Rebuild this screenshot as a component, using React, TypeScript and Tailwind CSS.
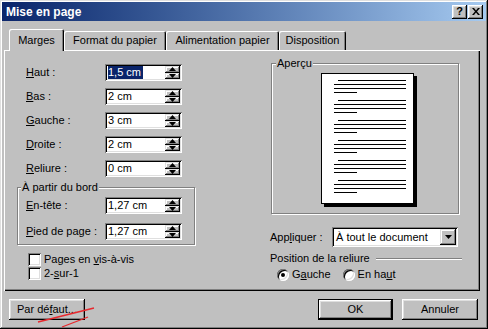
import React from 'react';

const raised = 'shadow-[inset_-1px_-1px_#000,inset_1px_1px_#fff,inset_-2px_-2px_#808080,inset_2px_2px_#dfdfdf]';
const sunken = 'shadow-[inset_1px_1px_#808080,inset_-1px_-1px_#fff,inset_2px_2px_#000,inset_-2px_-2px_#dfdfdf]';
const soft = 'shadow-[inset_-1px_-1px_#000,inset_1px_1px_#dfdfdf,inset_-2px_-2px_#808080,inset_2px_2px_#fff]';
const etched = 'border border-[#808080] shadow-[inset_1px_1px_#fff,1px_1px_#fff]';

const Acc = ({ children }: { children: React.ReactNode }) => <span className="underline underline-offset-[1px]">{children}</span>;

const Arrow = ({ down }: { down?: boolean }) => (
  <svg width="7" height="4" viewBox="0 0 7 4">
    <path d={down ? 'M0 0h7L3.5 4z' : 'M3.5 0L7 4H0z'} fill="#000" />
  </svg>
);

const Spin = ({ value, selected }: { value: string; selected?: boolean }) => (
  <div className={`w-[77px] h-[17px] bg-white flex p-[2px] ${sunken}`}>
    <div className="flex-1 flex items-center pl-[1px] leading-[13px]">
      <span className={selected ? 'bg-[#0a246a] text-white pr-[2px]' : ''}>{value}</span>
    </div>
    <div className="w-[15px] flex flex-col">
      <div className={`flex-1 bg-[#c0c0c0] flex items-center justify-center ${soft}`}><Arrow /></div>
      <div className={`flex-1 bg-[#c0c0c0] flex items-center justify-center ${soft}`}><Arrow down /></div>
    </div>
  </div>
);

const Row = ({ label, value, selected }: { label: React.ReactNode; value: string; selected?: boolean }) => (
  <div className="flex items-center h-[17px]">
    <div className="w-[79px]">{label}</div>
    <Spin value={value} selected={selected} />
  </div>
);

const Check = ({ children }: { children: React.ReactNode }) => (
  <div className="flex items-center gap-[3px] h-[13px] pl-[11px]">
    <div className={`w-[13px] h-[13px] bg-white ${sunken}`} />
    <span>{children}</span>
  </div>
);

const Radio = ({ checked, children }: { checked?: boolean; children: React.ReactNode }) => (
  <div className="flex items-center gap-[3px]">
    <div className={`w-[12px] h-[12px] rounded-full bg-white flex items-center justify-center ${sunken}`}>
      {checked && <div className="w-[4px] h-[4px] rounded-full bg-black" />}
    </div>
    <span>{children}</span>
  </div>
);

const Paragraph = () => (
  <div className="flex flex-col gap-[3px]">
    <div className="h-px bg-black ml-[16px] w-[68px]" />
    <div className="h-px bg-black ml-[12px] w-[72px]" />
    <div className="h-px bg-black ml-[12px] w-[72px]" />
    <div className="h-px bg-black ml-[12px] w-[23px]" />
  </div>
);

const tabs = [
  { label: 'Format du papier', w: 'w-[102px]' },
  { label: 'Alimentation papier', w: 'w-[113px]' },
  { label: 'Disposition', w: 'w-[67px]' },
];

export default function App() {
  return (
    <div className={`relative w-[488px] h-[329px] overflow-hidden bg-[#c0c0c0] p-[2px] flex flex-col text-[11px] text-black font-['Liberation_Sans',Arial,sans-serif] ${soft}`}>
      <div className="h-[19px] flex items-center justify-between pl-[4px] pr-[3px] bg-linear-to-r from-[#0a246a] to-[#a6caf0]">
        <span className="text-white font-bold text-[12px]">Mise en page</span>
        <div className="flex gap-[1px]">
          <div className={`w-[15px] h-[14px] bg-[#c0c0c0] flex items-center justify-center font-bold text-[11px] leading-none ${raised}`}>?</div>
          <div className={`w-[15px] h-[14px] bg-[#c0c0c0] flex items-center justify-center ${raised}`}>
            <svg width="8" height="7" viewBox="0 0 8 7">
              <path d="M0 0h2l2 2.5L6 0h2L5 3.5 8 7H6L4 4.5 2 7H0l3-3.5z" fill="#000" />
            </svg>
          </div>
        </div>
      </div>

      <div className="mt-[8px] h-[21px] flex items-end pl-[7px]">
        <div className="relative z-10 w-[55px] h-[22px] -mb-px bg-[#c0c0c0] rounded-t-[2px] flex items-center justify-center shadow-[inset_1px_1px_#fff,inset_-1px_0_#000,inset_-2px_0_#808080]">
          Marges
        </div>
        {tabs.map((t) => (
          <div key={t.label} className={`${t.w} h-[19px] rounded-t-[2px] flex items-center justify-center shadow-[inset_1px_1px_#fff,inset_-1px_0_#000,inset_-2px_0_#808080]`}>
            {t.label}
          </div>
        ))}
      </div>

      <div className="ml-[2px] w-[476px] h-[241px] flex shadow-[inset_1px_1px_#fff,inset_-1px_-1px_#000,inset_-2px_-2px_#808080]">
        <div className="w-[266px] pl-[13px] pt-[14px]">
          <div className="pl-[9px] flex flex-col gap-[7px]">
            <Row label={<><Acc>H</Acc>aut :</>} value="1,5 cm" selected />
            <Row label={<><Acc>B</Acc>as :</>} value="2 cm" />
            <Row label={<><Acc>G</Acc>auche :</>} value="3 cm" />
            <Row label={<><Acc>D</Acc>roite :</>} value="2 cm" />
            <Row label={<><Acc>R</Acc>eliure :</>} value="0 cm" />
          </div>
          <div className={`relative mt-[10px] w-[178px] h-[58px] pt-[9px] pl-[8px] flex flex-col gap-[9px] ${etched}`}>
            <span className="absolute -top-[7px] left-[3px] px-[1px] bg-[#c0c0c0] leading-[13px]">À partir du bord</span>
            <Row label={<><Acc>E</Acc>n-tête :</>} value="1,27 cm" />
            <Row label={<><Acc>P</Acc>ied de page :</>} value="1,27 cm" />
          </div>
          <div className="mt-[8px] flex flex-col gap-[1px]">
            <Check>Pages en <Acc>v</Acc>is-à-vis</Check>
            <Check>2-<Acc>s</Acc>ur-1</Check>
          </div>
        </div>

        <div className="w-[192px] pt-[13px]">
          <div className={`relative ml-[1px] w-[188px] h-[151px] pl-[49px] pt-[9px] ${etched}`}>
            <span className="absolute -top-[7px] left-[4px] px-[1px] bg-[#c0c0c0] leading-[13px]">Aperçu</span>
            <div className="w-[93px] h-[131px] bg-white border border-black shadow-[3px_3px_0_#000] pt-[6px] flex flex-col gap-[7px]">
              <Paragraph />
              <Paragraph />
              <Paragraph />
              <Paragraph />
              <Paragraph />
              <Paragraph />
            </div>
          </div>
          <div className="mt-[13px] flex items-center h-[20px]">
            <div className="w-[62px]">App<Acc>l</Acc>iquer :</div>
            <div className={`w-[126px] h-[20px] bg-white flex p-[2px] ${sunken}`}>
              <div className="flex-1 flex items-center pl-[2px]">À tout le document</div>
              <div className={`w-[16px] bg-[#c0c0c0] flex items-center justify-center ${soft}`}><Arrow down /></div>
            </div>
          </div>
          <div className="mt-[5px] flex items-center h-[13px]">
            <span>Position de la reliure</span>
            <div className="flex-1 ml-[6px] h-[2px] border-t border-[#808080] border-b border-b-white" />
          </div>
          <div className="mt-[3px] h-[13px] flex items-center gap-[12px] pl-[7px]">
            <Radio checked>G<Acc>a</Acc>uche</Radio>
            <Radio>En ha<Acc>u</Acc>t</Radio>
          </div>
        </div>
      </div>

      <div className="mt-[8px] h-[21px] flex pl-[7px] pr-[8px]">
        <div className={`w-[76px] h-[21px] flex items-center justify-center ${raised}`}>Par dé<Acc>f</Acc>aut...</div>
        <div className="flex-1" />
        <div className={`w-[75px] h-[21px] flex items-center justify-center border border-black ${raised}`}>OK</div>
        <div className={`ml-[9px] w-[76px] h-[21px] flex items-center justify-center ${raised}`}>Annuler</div>
      </div>

      <svg className="absolute left-0 top-0 pointer-events-none" width="488" height="329">
        <path d="M38 322L94 308" stroke="#e8282d" strokeWidth="1.3" />
        <path d="M62 327L88 317" stroke="#e8282d" strokeWidth="1.3" />
      </svg>
    </div>
  );
}
